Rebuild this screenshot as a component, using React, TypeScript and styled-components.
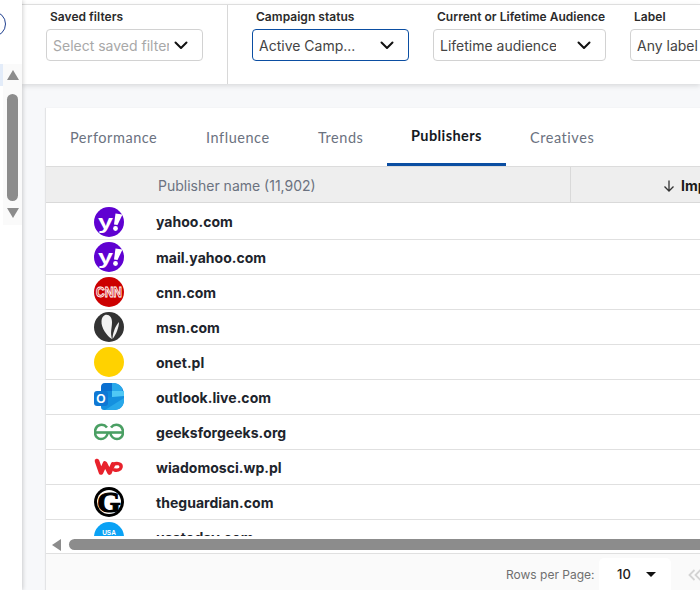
import styled, { createGlobalStyle } from "styled-components"

const GlobalStyle = createGlobalStyle`
  html, body {
    margin: 0;
    padding: 0;
    background: #f7f8fa;
    overflow: hidden;
  }
  * {
    box-sizing: border-box;
  }
`

const YahooLogo = () => (
  <svg width="30" height="30" viewBox="0 0 30 30">
    <circle cx="15" cy="15" r="15" fill="#5f01d1" />
    <text
      x="4"
      y="22"
      fontFamily="Liberation Sans, sans-serif"
      fontWeight="700"
      fontSize="20"
      textLength="15"
      lengthAdjust="spacingAndGlyphs"
      fill="#fff"
    >
      y
    </text>
    <path d="M21.5 6.5 L28.5 7.5 L23.5 18 L20 17.5 Z" fill="#fff" />
    <circle cx="21.5" cy="21.5" r="2.4" fill="#fff" />
  </svg>
)

const CnnLogo = () => (
  <svg width="30" height="30" viewBox="0 0 30 30">
    <circle cx="15" cy="15" r="15" fill="#cc0000" />
    <text
      x="15"
      y="20"
      textAnchor="middle"
      fontFamily="Liberation Sans, sans-serif"
      fontSize="14.5"
      fontWeight="700"
      textLength="26"
      lengthAdjust="spacingAndGlyphs"
      fill="#d81c1c"
      stroke="#fff"
      strokeWidth="0.9"
    >
      CNN
    </text>
  </svg>
)

const MsnLogo = () => (
  <svg width="30" height="30" viewBox="0 0 30 30">
    <circle cx="15" cy="15" r="15" fill="#333333" />
    <path d="M11 3 C15 2 18 5 18 10 C18 16 16 20 18 27 C13 24 7 16 7.5 9 C7.6 6 9 4 11 3 Z" fill="#f2f2f2" />
    <path d="M25 10 C25 15 22 23 18.5 27 C18.5 22 21 14 25 10 Z" fill="#f2f2f2" />
  </svg>
)

const OnetLogo = () => (
  <svg width="30" height="30" viewBox="0 0 30 30">
    <circle cx="15" cy="15" r="15" fill="#ffd200" />
  </svg>
)

const OutlookLogo = () => (
  <svg width="30" height="30" viewBox="0 0 30 30">
    <g transform="translate(0 1)">
      <path d="M7 4 C7 2 8 0 11 0 H19 C25 0 30 5 30 12 V15 H7 Z" fill="#0a6fd0" />
      <path d="M18 0 H19 C23 0 27 2 28.5 6 V8 H18 Z" fill="#28a8ea" />
      <rect x="18" y="8" width="12" height="7" fill="#50c8f5" />
      <rect x="7" y="8" width="11" height="7" fill="#0f88dc" />
      <path d="M7 15 L30 13 V17 C30 23 26 27 20 27 H10 C8 27 7 26 7 24 Z" fill="#1490df" />
      <path d="M11 27 L30 15 V17 C30 23 26 27 20 27 Z" fill="#28a8ea" />
      <rect x="0" y="8" width="14" height="15" rx="3" fill="#0f78d4" />
      <text
        x="7"
        y="20"
        textAnchor="middle"
        fontFamily="Liberation Sans, sans-serif"
        fontWeight="700"
        fontSize="12"
        fill="#fff"
      >
        O
      </text>
    </g>
  </svg>
)

const GeeksLogo = () => (
  <svg width="30" height="30" viewBox="0 0 30 30" fill="none" stroke="#4a9f63" strokeWidth="2.6">
    <path d="M1 15.5 H29" />
    <path d="M13 10.5 C11 8 8 7.5 6 8 C2.5 9 1 12 1 15.5 C1 19 3.5 22 7 22 C10 22 13 19.5 14 15.5" />
    <path d="M17 10.5 C19 8 22 7.5 24 8 C27.5 9 29 12 29 15.5 C29 19 26.5 22 23 22 C20 22 17 19.5 16 15.5" />
  </svg>
)

const WpLogo = () => (
  <svg width="30" height="30" viewBox="0 0 30 30" fill="none" stroke="#e8222c" strokeLinejoin="round" strokeLinecap="round">
    <path d="M3 9 L7 20.5 L11 11.5 L15.5 20.5 L19 12.5" strokeWidth="4.6" />
    <path d="M19 12.5 C23 10.5 28 11.5 27 15.5 C26.5 18 23 18.5 20.5 18" strokeWidth="3.4" />
  </svg>
)

const GuardianLogo = () => (
  <svg width="30" height="30" viewBox="0 0 30 30">
    <circle cx="15" cy="15" r="15" fill="#000" />
    <circle cx="15" cy="15" r="12" fill="#fff" />
    <text
      x="15"
      y="25"
      textAnchor="middle"
      fontFamily="Liberation Serif, serif"
      fontWeight="700"
      fontSize="30"
      fill="#000"
      stroke="#000"
      strokeWidth="1.2"
    >
      G
    </text>
  </svg>
)

const UsaTodayLogo = () => (
  <svg width="30" height="30" viewBox="0 0 30 30">
    <circle cx="15" cy="15" r="15" fill="#0aa2f5" />
    <text
      x="15"
      y="13"
      textAnchor="middle"
      fontFamily="Liberation Sans, sans-serif"
      fontWeight="700"
      fontSize="6.5"
      fill="#fff"
    >
      USA
    </text>
  </svg>
)

const publishers = [
  { name: "yahoo.com", logo: <YahooLogo /> },
  { name: "mail.yahoo.com", logo: <YahooLogo /> },
  { name: "cnn.com", logo: <CnnLogo /> },
  { name: "msn.com", logo: <MsnLogo /> },
  { name: "onet.pl", logo: <OnetLogo /> },
  { name: "outlook.live.com", logo: <OutlookLogo /> },
  { name: "geeksforgeeks.org", logo: <GeeksLogo /> },
  { name: "wiadomosci.wp.pl", logo: <WpLogo /> },
  { name: "theguardian.com", logo: <GuardianLogo /> },
  { name: "usatoday.com", logo: <UsaTodayLogo /> },
]

const tabs = [
  { label: "Performance", width: 136 },
  { label: "Influence", width: 112 },
  { label: "Trends", width: 93 },
  { label: "Publishers", width: 119 },
  { label: "Creatives", width: 112 },
]

const Chevron = () => (
  <svg width="14" height="14" viewBox="0 0 14 14" fill="none" stroke="#111" strokeWidth="2" strokeLinecap="round" strokeLinejoin="round">
    <path d="M1.5 4.5 L7 10 L12.5 4.5" />
  </svg>
)

export default function App() {
  return (
    <Page>
      <GlobalStyle />
      <Sidebar>
        <Avatar />
        <ScrollArea>
          <ActiveStrip />
          <ScrollColumn>
            <ArrowUp />
            <ScrollThumb />
            <ArrowDown />
          </ScrollColumn>
        </ScrollArea>
      </Sidebar>
      <Main>
        <FilterBar>
          <SavedSection>
            <FilterGroup $width={157}>
              <FilterLabel>Saved filters</FilterLabel>
              <SelectBox>
                <SelectText $muted>Select saved filter</SelectText>
                <Chevron />
              </SelectBox>
            </FilterGroup>
          </SavedSection>
          <FilterSection>
            <FilterGroup $width={157}>
              <FilterLabel>Campaign status</FilterLabel>
              <SelectBox $focused>
                <SelectText>Active Camp...</SelectText>
                <Chevron />
              </SelectBox>
            </FilterGroup>
            <FilterGroup $width={173}>
              <FilterLabel>Current or Lifetime Audience</FilterLabel>
              <SelectBox>
                <SelectText>Lifetime audience</SelectText>
                <Chevron />
              </SelectBox>
            </FilterGroup>
            <FilterGroup $width={157}>
              <FilterLabel>Label</FilterLabel>
              <SelectBox>
                <SelectText>Any label</SelectText>
                <Chevron />
              </SelectBox>
            </FilterGroup>
          </FilterSection>
        </FilterBar>
        <Content>
          <Card>
            <TabRow>
              {tabs.map((tab) => (
                <Tab key={tab.label} $width={tab.width} $active={tab.label === "Publishers"}>
                  {tab.label}
                </Tab>
              ))}
            </TabRow>
            <HeaderRow>
              <PublisherHeader>Publisher name (11,902)</PublisherHeader>
              <MetricHeader>
                <svg width="14" height="14" viewBox="0 0 14 14" fill="none" stroke="#333" strokeWidth="1.3">
                  <path d="M7 1.5 V12 M2.5 7.5 L7 12 L11.5 7.5" />
                </svg>
                <span>Impressions</span>
              </MetricHeader>
            </HeaderRow>
            <Rows>
              {publishers.map((publisher) => (
                <Row key={publisher.name}>
                  <LogoCell>{publisher.logo}</LogoCell>
                  <PublisherName>{publisher.name}</PublisherName>
                </Row>
              ))}
            </Rows>
            <ScrollBand>
              <ArrowLeft />
              <HorizontalThumb />
            </ScrollBand>
            <Footer>
              <RowsLabel>Rows per Page:</RowsLabel>
              <RowsSelect>
                <span>10</span>
                <Caret />
              </RowsSelect>
              <PagerFirst>
                <svg width="14" height="14" viewBox="0 0 14 14" fill="none" stroke="#d4d4d4" strokeWidth="1.8">
                  <path d="M6.5 2 L1.5 7 L6.5 12 M12.5 2 L7.5 7 L12.5 12" />
                </svg>
              </PagerFirst>
            </Footer>
          </Card>
        </Content>
      </Main>
    </Page>
  )
}

const Page = styled.div`
  display: flex;
  width: 700px;
  height: 590px;
  overflow: hidden;
  font-family: Inter, "Liberation Sans", sans-serif;
`

const Sidebar = styled.aside`
  position: relative;
  z-index: 3;
  flex: 0 0 22px;
  display: flex;
  flex-direction: column;
  background: #fff;
  box-shadow: 1px 0 4px rgba(0, 0, 0, 0.18);
  overflow: hidden;
`

const Avatar = styled.div`
  flex: none;
  width: 26px;
  height: 26px;
  margin: 11px 0 0 -20px;
  border: 1px solid #1f3f8f;
  border-radius: 50%;
`

const ScrollArea = styled.div`
  display: flex;
  height: 161px;
  margin-top: 27px;
`

const ActiveStrip = styled.div`
  flex: 0 0 3px;
  height: 22px;
  background: #e3ecf9;
`

const ScrollColumn = styled.div`
  flex: 1;
  display: flex;
  flex-direction: column;
  align-items: center;
  height: 161px;
  padding-top: 6px;
  background: #fafafa;
`

const ArrowUp = styled.div`
  flex: none;
  width: 0;
  height: 0;
  border-left: 6.5px solid transparent;
  border-right: 6.5px solid transparent;
  border-bottom: 10px solid #8c8c8c;
`

const ArrowDown = styled.div`
  flex: none;
  width: 0;
  height: 0;
  margin-top: 7px;
  border-left: 6.5px solid transparent;
  border-right: 6.5px solid transparent;
  border-top: 10px solid #8c8c8c;
`

const ScrollThumb = styled.div`
  flex: none;
  width: 11px;
  height: 107px;
  margin-top: 14px;
  border-radius: 6px;
  background: #8c8c8c;
`

const Main = styled.main`
  flex: 1;
  min-width: 0;
  display: flex;
  flex-direction: column;
  padding-top: 4px;
  background: #fff;
  overflow: hidden;
`

const FilterBar = styled.header`
  position: relative;
  z-index: 2;
  flex: 0 0 80px;
  display: flex;
  border-top: 1px solid #dedede;
  background: #fff;
  box-shadow: 0 2px 5px rgba(0, 0, 0, 0.12);
`

const SavedSection = styled.section`
  flex: 0 0 206px;
  padding-left: 24px;
  border-right: 1px solid #d8d8d8;
`

const FilterSection = styled.section`
  display: flex;
  gap: 24px;
  padding-left: 24px;
`

const FilterGroup = styled.div<{ $width: number }>`
  flex: 0 0 ${({ $width }) => $width}px;
  width: ${({ $width }) => $width}px;
  min-width: 0;
  display: flex;
  flex-direction: column;
`

const FilterLabel = styled.label`
  height: 24px;
  padding: 4px 0 0 4px;
  font-size: 12px;
  line-height: 15px;
  font-weight: 600;
  letter-spacing: 0.03px;
  white-space: nowrap;
  color: #2b2b2b;
`

const SelectBox = styled.div<{ $focused?: boolean }>`
  display: flex;
  align-items: center;
  justify-content: space-between;
  height: 32px;
  padding: 0 14px 0 6px;
  background: #fff;
  border: 1px solid ${({ $focused }) => ($focused ? "#0b4ea2" : "#d2d2d2")};
  border-radius: 4px;
`

const SelectText = styled.span<{ $muted?: boolean }>`
  overflow: hidden;
  max-width: 116px;
  white-space: nowrap;
  font-size: 14px;
  color: ${({ $muted }) => ($muted ? "#a8a8a8" : "#444")};
`

const Content = styled.div`
  flex: 1;
  min-height: 0;
  padding: 24px 0 0 24px;
  background: #f7f8fa;
`

const Card = styled.section`
  width: 900px;
  background: #fff;
  box-shadow: -1px 0 1px rgba(0, 0, 0, 0.08);
`

const TabRow = styled.nav`
  display: flex;
  height: 59px;
  border-bottom: 1px solid #dcdcdc;
`

const Tab = styled.div<{ $active?: boolean; $width: number }>`
  flex: 0 0 ${({ $width }) => $width}px;
  display: flex;
  align-items: center;
  height: 58px;
  padding: 0 0 ${({ $active }) => ($active ? "1px" : "0")} 24px;
  font-family: Lato, sans-serif;
  font-size: 14.5px;
  font-weight: ${({ $active }) => ($active ? 700 : 400)};
  letter-spacing: ${({ $active }) => ($active ? "0.4px" : "0.55px")};
  color: ${({ $active }) => ($active ? "#15191f" : "#6b7280")};
  border-bottom: ${({ $active }) => ($active ? "3px solid #0b4ea2" : "0")};
`

const HeaderRow = styled.div`
  display: flex;
  height: 36px;
  background: #eeeeee;
  border-bottom: 1px solid #d9d9d9;
`

const PublisherHeader = styled.div`
  flex: 0 0 525px;
  display: flex;
  align-items: center;
  padding: 2px 0 0 112px;
  font-size: 14px;
  color: #6b7280;
  border-right: 1px solid #d9d9d9;
`

const MetricHeader = styled.div`
  display: flex;
  align-items: center;
  gap: 5px;
  padding: 2px 0 0 91px;
  font-size: 14px;
  font-weight: 700;
  color: #1a1a1a;
`

const Rows = styled.div`
  height: 333px;
  overflow: hidden;
`

const Row = styled.div`
  display: flex;
  align-items: center;
  gap: 32px;
  height: 35px;
  padding-left: 48px;
  border-bottom: 1px solid #e0e0e0;

  &:first-child {
    height: 37px;
    padding-top: 1px;
  }
`

const LogoCell = styled.div`
  flex: 0 0 30px;
  height: 30px;

  svg {
    display: block;
  }
`

const PublisherName = styled.div`
  font-size: 14px;
  font-weight: 700;
  letter-spacing: 0.03px;
  color: #20242c;
`

const ScrollBand = styled.div`
  display: flex;
  align-items: center;
  height: 18px;
  padding-left: 6px;
  background: #fff;
  border-bottom: 1px solid #e0e0e0;
`

const ArrowLeft = styled.div`
  flex: none;
  width: 0;
  height: 0;
  border-top: 6px solid transparent;
  border-bottom: 6px solid transparent;
  border-right: 9px solid #8c8c8c;
`

const HorizontalThumb = styled.div`
  flex: 1;
  height: 11px;
  margin-left: 8px;
  border-radius: 6px;
  background: #8c8c8c;
`

const Footer = styled.footer`
  display: flex;
  align-items: flex-start;
  height: 40px;
  padding: 4px 0 0 460px;
  background: #fafafa;
`

const RowsLabel = styled.span`
  width: 93px;
  line-height: 34px;
  font-size: 12px;
  color: #6f6f6f;
  white-space: nowrap;
`

const RowsSelect = styled.div`
  flex: 0 0 72px;
  display: flex;
  align-items: center;
  justify-content: space-between;
  height: 36px;
  padding: 0 15px 4px 18px;
  background: #fff;
  border-radius: 5px;
  font-size: 13px;
  font-weight: 500;
  color: #1a1a1a;
`

const Caret = styled.div`
  width: 0;
  height: 0;
  border-left: 5px solid transparent;
  border-right: 5px solid transparent;
  border-top: 5px solid #111;
`

const PagerFirst = styled.div`
  display: flex;
  align-items: center;
  height: 34px;
  margin-left: 17px;
`
